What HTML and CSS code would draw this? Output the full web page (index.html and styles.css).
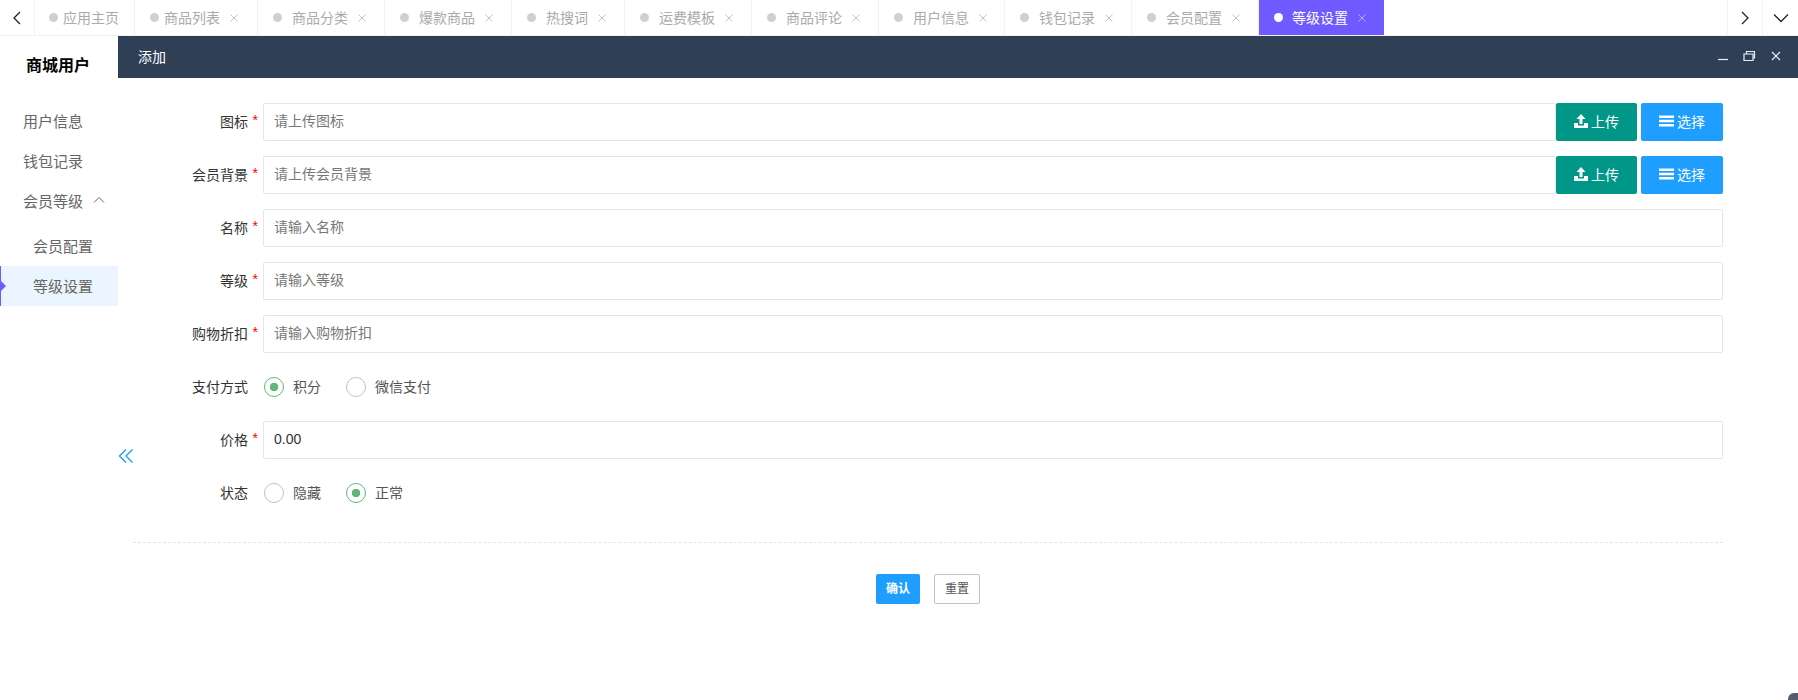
FILE: index.html
```html
<!DOCTYPE html>
<html lang="zh">
<head>
<meta charset="utf-8">
<title>等级设置</title>
<link rel="stylesheet" href="styles.css">
</head>
<body>
<div class="tabbar">
  <div class="nav-btn"><svg width="12" height="16" viewBox="0 0 12 16"><path d="M9 2 3 8l6 6" class="chev"/></svg></div>
  <div class="tabs">
    <div class="tab first"><i></i>应用主页</div>
    <div class="tab t2"><i></i>商品列表<svg class="x" width="8" height="8" viewBox="0 0 8 8"><path d="m.5.500 7 7M7.500.500l-7 7"/></svg></div>
    <div class="tab"><i></i>商品分类<svg class="x" width="8" height="8" viewBox="0 0 8 8"><path d="m.5.500 7 7M7.500.500l-7 7"/></svg></div>
    <div class="tab"><i></i>爆款商品<svg class="x" width="8" height="8" viewBox="0 0 8 8"><path d="m.5.500 7 7M7.500.500l-7 7"/></svg></div>
    <div class="tab"><i></i>热搜词<svg class="x" width="8" height="8" viewBox="0 0 8 8"><path d="m.5.500 7 7M7.500.500l-7 7"/></svg></div>
    <div class="tab"><i></i>运费模板<svg class="x" width="8" height="8" viewBox="0 0 8 8"><path d="m.5.500 7 7M7.500.500l-7 7"/></svg></div>
    <div class="tab"><i></i>商品评论<svg class="x" width="8" height="8" viewBox="0 0 8 8"><path d="m.5.500 7 7M7.500.500l-7 7"/></svg></div>
    <div class="tab t8"><i></i>用户信息<svg class="x" width="8" height="8" viewBox="0 0 8 8"><path d="m.5.500 7 7M7.500.500l-7 7"/></svg></div>
    <div class="tab"><i></i>钱包记录<svg class="x" width="8" height="8" viewBox="0 0 8 8"><path d="m.5.500 7 7M7.500.500l-7 7"/></svg></div>
    <div class="tab"><i></i>会员配置<svg class="x" width="8" height="8" viewBox="0 0 8 8"><path d="m.5.500 7 7M7.500.500l-7 7"/></svg></div>
    <div class="tab active"><i></i>等级设置<svg class="x" width="8" height="8" viewBox="0 0 8 8"><path d="m.5.500 7 7M7.500.500l-7 7"/></svg></div>
  </div>
  <div class="nav-btn"><svg width="12" height="16" viewBox="0 0 12 16"><path d="m3 2 6 6-6 6" class="chev"/></svg></div>
  <div class="nav-btn wide"><svg width="16" height="12" viewBox="0 0 16 12"><path d="m1 2.500 7 7 7-7" class="chev"/></svg></div>
</div>
<div class="main">
  <aside class="side">
    <h2 class="side-title">商城用户</h2>
    <div class="side-item">用户信息</div>
    <div class="side-item">钱包记录</div>
    <div class="side-item group">会员等级<svg width="12" height="8" viewBox="0 0 12 8"><path d="m1 6.500 5-5 5 5" class="thin"/></svg></div>
    <div class="side-sub">会员配置</div>
    <div class="side-sub current">等级设置</div>
  </aside>
  <section class="panel">
    <div class="panel-head">
      <span>添加</span>
      <div class="win-btns">
        <svg width="12" height="12" viewBox="0 0 12 12"><path d="M1 9.500h10" class="win"/></svg>
        <svg width="13" height="12" viewBox="0 0 13 12"><path d="M1 4h9v6.500H1zM3.500 3.500v-2h8v6.500H10" class="win"/></svg>
        <svg width="12" height="12" viewBox="0 0 12 12"><path d="m2 2 8 8M10 2l-8 8" class="win"/></svg>
      </div>
    </div>
    <form class="form">
      <div class="row">
        <label class="lbl">图标<em>*</em></label>
        <input class="inp" placeholder="请上传图标">
        <button type="button" class="btn teal"><svg width="14" height="14" viewBox="0 0 14 14"><path d="M7 0 2.500 5h3v5h3V5h3zM0 9h4v2.500h6V9h4v5H0z" fill="#fff"/></svg>上传</button>
        <button type="button" class="btn blue"><svg width="15" height="12" viewBox="0 0 15 12"><path d="M0 .5h15v2.500H0zM0 4.800h15v2.500H0zM0 9h15v2.500H0z" fill="#fff"/></svg>选择</button>
      </div>
      <div class="row">
        <label class="lbl">会员背景<em>*</em></label>
        <input class="inp" placeholder="请上传会员背景">
        <button type="button" class="btn teal"><svg width="14" height="14" viewBox="0 0 14 14"><path d="M7 0 2.500 5h3v5h3V5h3zM0 9h4v2.500h6V9h4v5H0z" fill="#fff"/></svg>上传</button>
        <button type="button" class="btn blue"><svg width="15" height="12" viewBox="0 0 15 12"><path d="M0 .5h15v2.500H0zM0 4.800h15v2.500H0zM0 9h15v2.500H0z" fill="#fff"/></svg>选择</button>
      </div>
      <div class="row">
        <label class="lbl">名称<em>*</em></label>
        <input class="inp" placeholder="请输入名称">
      </div>
      <div class="row">
        <label class="lbl">等级<em>*</em></label>
        <input class="inp" placeholder="请输入等级">
      </div>
      <div class="row">
        <label class="lbl">购物折扣<em>*</em></label>
        <input class="inp" placeholder="请输入购物折扣">
      </div>
      <div class="row">
        <label class="lbl">支付方式</label>
        <div class="radios">
          <span class="radio on"></span><span class="radio-text">积分</span>
          <span class="radio"></span><span class="radio-text">微信支付</span>
        </div>
      </div>
      <div class="row">
        <label class="lbl">价格<em>*</em></label>
        <input class="inp" value="0.00">
      </div>
      <div class="row">
        <label class="lbl">状态</label>
        <div class="radios">
          <span class="radio"></span><span class="radio-text">隐藏</span>
          <span class="radio on"></span><span class="radio-text">正常</span>
        </div>
      </div>
      <div class="actions">
        <button type="button" class="mini ok">确认</button>
        <button type="button" class="mini reset">重置</button>
      </div>
    </form>
    <svg class="collapse" width="14" height="14" viewBox="0 0 14 14"><path d="M7 .5.500 7 7 13.500M13.500.500 7 7l6.500 6.500" class="coll"/></svg>
  </section>
</div>
<div class="corner"></div>
</body>
</html>
```
FILE: styles.css
```css
* { box-sizing: border-box; }
html, body { margin: 0; height: 700px; overflow: hidden; background: #fff; }
body { font-family: "Liberation Sans", "Noto Sans CJK SC", sans-serif; font-size: 14px; color: #333; }
.tabbar { display: flex; height: 36px; border-bottom: 1px solid #f2f2f2; }
.nav-btn { width: 35px; flex: none; display: flex; align-items: center; justify-content: center; border-right: 1px solid #f2f2f2; }
.nav-btn:nth-of-type(n+2) { border-right: 0; border-left: 1px solid #f2f2f2; }
.nav-btn.wide { width: 36px; }
.chev { fill: none; stroke: #222; stroke-width: 1.300; }
.tabs { flex: 1; display: flex; overflow: hidden; }
.tab { display: flex; align-items: center; height: 35px; flex: none; padding: 0 18px 2px 15px; border-right: 1px solid #f2f2f2; color: #aaa; white-space: nowrap; }
.tab i { width: 9px; height: 9px; border-radius: 50%; background: #d0d0d0; margin: 2px 10px 0 0; }
.tab .x { margin: 2px 0 0 10px; fill: none; stroke: #c4c4c4; stroke-width: 1; }
.tab.first { padding: 0 15px 2px 14px; }
.tab.first i { margin-right: 5px; }
.tab.t2 { padding-right: 19px; }
.tab.t2 i { margin-right: 5px; }
.tab.t8 { padding-right: 17px; }
.tab.active { background: #6f5aff; color: #fff; border-right: 0; }
.tab.active i { background: #fff; margin-right: 9px; }
.tab.active .x { stroke: #b5aaff; }
.main { display: flex; height: 664px; }
.side { width: 118px; flex: none; }
.side-title { margin: 0 0 7px; height: 58px; padding: 0 2px 2px 0; display: flex; align-items: center; justify-content: center; font-size: 16px; font-weight: 700; color: #000; }
.side-item { height: 40px; padding: 0 0 2px 23px; display: flex; align-items: center; color: #666; font-size: 15px; }
.group { margin-bottom: 5px; }
.group svg { margin-left: 10px; }
.thin { fill: none; stroke: #666; stroke-width: 1; }
.side-sub { height: 40px; padding: 0 0 2px 33px; display: flex; align-items: center; color: #666; font-size: 15px; }
.side-sub.current { background: #ebf5ff; border-left: 1px solid #6f5aff; padding-left: 32px; position: relative; }
.side-sub.current::before { content: ""; position: absolute; left: 0; top: 15px; border: 5px solid transparent; border-left-color: #6f5aff; }
.panel { flex: 1; position: relative; }
.panel-head { height: 42px; background: #2f4056; color: #fff; display: flex; align-items: center; justify-content: space-between; padding: 0 16px 2px 20px; }
.win-btns { display: flex; gap: 14px; }
.win { fill: none; stroke: #eee; stroke-width: 1.200; }
.form { padding: 25px 0 0 15px; }
.row { display: flex; align-items: center; height: 38px; margin-bottom: 15px; padding-right: 75px; }
.lbl { width: 130px; flex: none; text-align: right; padding: 0 15px 2px 0; color: #333; position: relative; }
.lbl em { position: absolute; right: 5px; top: 1px; color: #f00; font-style: normal; font-size: 14px; }
.inp { flex: 1; min-width: 0; height: 38px; border: 1px solid #e6e6e6; border-radius: 2px; padding: 0 10px 2px; font: inherit; color: #333; outline: none; }
.inp::placeholder { color: #777; }
.btn { width: 81px; height: 38px; border: 0; border-radius: 2px; color: #fff; font: inherit; padding: 0 0 2px; display: flex; align-items: center; justify-content: center; gap: 3px; }
.btn.blue { width: 82px; margin-left: 4px; }
.teal { background: #009688; }
.blue { background: #1e9fff; }
.radios { display: flex; align-items: center; }
.radio { width: 20px; height: 20px; border-radius: 50%; border: 1.700px solid #c2c2c2; margin-left: 1px; }
.radio.on { border-color: #5fb878; background: radial-gradient(circle, #5fb878 0 4px, #fff 4.500px); }
.radio-text { margin: 0 24px 2px 9px; color: #555; }
.actions { border-top: 1px dashed #e6e6e6; margin: 30px 75px 0 0; padding-top: 31px; display: flex; justify-content: center; gap: 14px; }
.mini { height: 30px; border-radius: 2px; font-family: inherit; font-size: 12px; padding: 0 0 3px; }
.ok { width: 44px; background: #1e9fff; color: #fff; border: 0; font-weight: 700; }
.reset { width: 46px; background: #fff; border: 1px solid #c2c2c2; color: #555; }
.collapse { position: absolute; left: 1px; top: 413px; }
.coll { fill: none; stroke: #1e9fff; stroke-width: 1.300; }
.corner { position: fixed; right: -14px; bottom: -14px; width: 24px; height: 21px; border-radius: 6px; background: #555c6b; }
```
